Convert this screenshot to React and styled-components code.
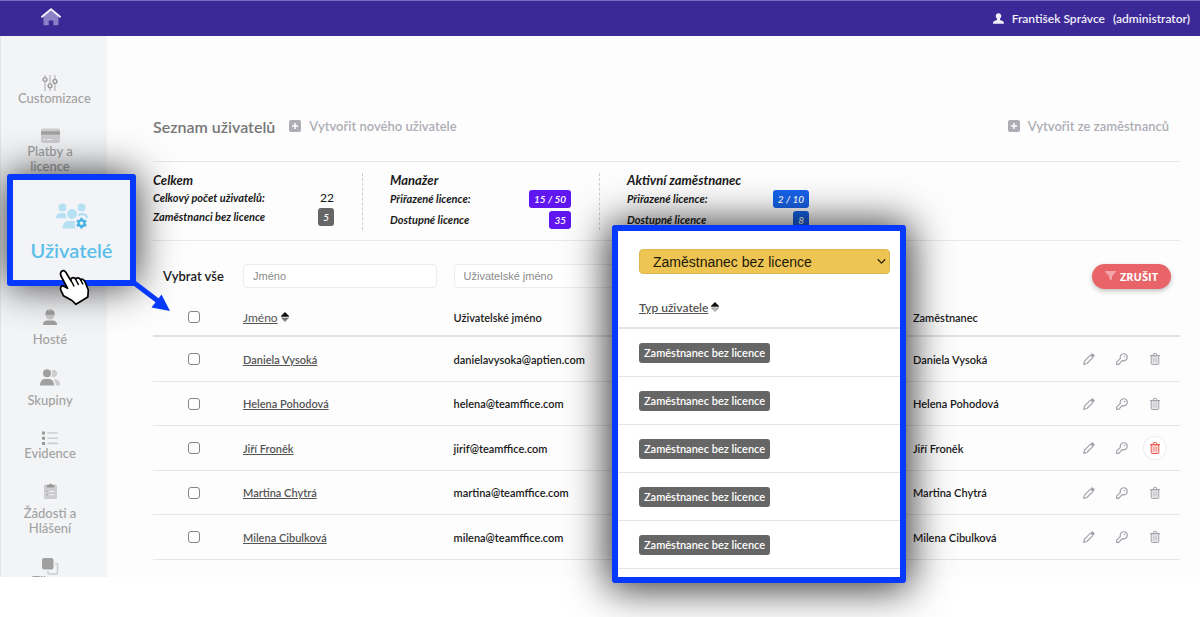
import React, { useState } from 'react';
import styled, { createGlobalStyle, css } from 'styled-components';

const GlobalStyle = createGlobalStyle`
  * {
    box-sizing: border-box;
  }
  body {
    margin: 0;
    background: #fff;
    color: #1a1a1a;
    font-family: Lato, 'Liberation Sans', sans-serif;
    font-size: 12px;
    font-weight: 500;
  }
`;

const Page = styled.div`
  position: relative;
  min-height: 100vh;
`;

const Topbar = styled.header`
  display: flex;
  align-items: center;
  justify-content: space-between;
  height: 36px;
  padding: 0 10px 0 41px;
  background: #3b2997;
  border-top: 1px solid #7a6cba;
`;

const HomeLink = styled.a`
  display: flex;
  margin-bottom: 4px;
`;

const Account = styled.a`
  display: flex;
  align-items: center;
  gap: 8px;
  color: #f1eff9;
  font-size: 12px;
  font-weight: 600;
  text-decoration: none;
`;

const Body = styled.div`
  display: grid;
  grid-template-columns: 107px 1fr;
`;

const Sidebar = styled.nav`
  contain: size;
  display: flex;
  flex-direction: column;
  gap: 22px;
  padding: 39px 25px 0 17px;
  overflow: hidden;
  background: #f3f4f6;
  border-left: 1px solid #e3e4e8;
`;

const SideItem = styled.a`
  display: flex;
  flex-direction: column;
  flex: none;
  gap: ${(props) => (props.$loose ? '7px' : '0')};
  color: #a2a2a2;
  font-size: 13px;
  line-height: 15px;
  text-align: center;
  text-decoration: none;

  svg {
    display: block;
    margin: 0 auto;
    overflow: visible;
  }
`;

const ActiveSlot = styled.div`
  flex: none;
  height: 91px;
`;

const ActiveItem = styled.a`
  position: absolute;
  top: 174px;
  left: 7px;
  display: flex;
  flex-direction: column;
  align-items: center;
  gap: 9px;
  width: 129px;
  height: 112px;
  padding-top: 23px;
  background: #f3f4f7;
  border: 6px solid #0639fb;
  border-radius: 3px;
  box-shadow: 0 0 40px rgba(0, 0, 0, 0.8);
  color: #5bbfe8;
  font-size: 20px;
  font-weight: 600;
  line-height: 24px;
  text-decoration: none;
`;

const Pointer = styled.svg`
  position: absolute;
  top: 264px;
  left: 54px;
  pointer-events: none;
`;

const Arrow = styled.svg`
  position: absolute;
  top: 278px;
  left: 128px;
  pointer-events: none;
`;

const Main = styled.main`
  padding: 74px 20px 17px 46px;
  background: #fdfdfd;
`;

const TitleRow = styled.div`
  display: flex;
  align-items: center;
  gap: 14px;
  height: 32px;
  padding-right: 11px;
  margin-bottom: 19px;
`;

const Title = styled.h1`
  margin: 0;
  color: #777;
  font-size: 16px;
  font-weight: 600;
`;

const CreateLink = styled.a`
  display: flex;
  align-items: center;
  gap: 8px;
  margin-left: ${(props) => (props.$right ? 'auto' : '0')};
  color: #adadb5;
  font-size: 13px;
  font-weight: 600;
  text-decoration: none;
`;

const Stats = styled.section`
  display: grid;
  grid-template-columns: repeat(3, 210px);
  column-gap: 27px;
  padding: 11px 0 10px;
  border-top: 1px solid #e8e8e8;
  border-bottom: 1px solid #e8e8e8;
  font-style: italic;
  font-weight: 600;
`;

const StatGroup = styled.div`
  padding-right: 28px;

  &:not(:last-child) {
    border-right: 1px dashed #cfcfcf;
  }
`;

const StatTitle = styled.h2`
  margin: 0;
  font-size: 13px;
  font-weight: 700;
  line-height: 15px;
`;

const StatLine = styled.div`
  display: flex;
  align-items: center;
  justify-content: space-between;
  min-height: ${(props) => (props.$tall ? '21px' : '19px')};
  font-size: 11px;
  font-weight: 700;
`;

const Count = styled.span`
  font-size: 12px;
  font-style: normal;
  font-weight: 500;
`;

const Badge = styled.span`
  display: inline-block;
  padding: 0 5px;
  border-radius: 3px;
  background: ${(props) => props.$color || '#666'};
  color: #fff;
  font-size: ${(props) => (props.$large ? '11px' : '10px')};
  font-weight: 600;
  line-height: ${(props) => (props.$large ? '20px' : '18px')};
`;

const Table = styled.table`
  width: 100%;
  border-collapse: separate;
  border-spacing: 0;
  table-layout: fixed;
`;

const Th = styled.th`
  height: ${(props) => (props.$filter ? '62px' : '34px')};
  padding: ${(props) => (props.$filter ? '8px 17px 0 0' : '0 0 4px')};
  border-bottom: ${(props) => (props.$filter ? '0' : '2px solid #e2e2e2')};
  font-size: 11px;
  font-weight: 600;
  text-align: left;
  white-space: nowrap;

  &:last-child {
    padding-right: 9px;
  }
`;

const Td = styled.td`
  height: 45px;
  padding: 0;
  border-bottom: 1px solid #e6e6e6;
  font-size: 11px;
  font-weight: 600;

  tr:nth-child(even) > & {
    height: 44px;
  }
`;

const SelectAll = styled.label`
  padding-left: 10px;
  font-size: 13px;
  font-weight: 600;
`;

const Checkbox = styled.input`
  appearance: none;
  display: block;
  width: 12px;
  height: 12px;
  margin: 0 0 0 35px;
  background: #fff;
  border: 1px solid #858585;
  border-radius: 3px;

  &:checked {
    background: #0639fb;
  }
`;

const FilterInput = styled.input`
  display: block;
  width: 100%;
  height: 24px;
  padding: 0 9px;
  background: #fff;
  border: 1px solid #ececf2;
  border-radius: 4px;
  color: #333;
  font-family: 'Liberation Sans', Arial, sans-serif;
  font-size: 11px;

  &::placeholder {
    color: #8b8b8b;
  }
`;

const ResetButton = styled.button`
  display: flex;
  align-items: center;
  justify-content: center;
  gap: 4px;
  width: 79px;
  height: 25px;
  margin-left: auto;
  padding: 0;
  background: #e86468;
  border: 0;
  border-radius: 13px;
  box-shadow: 0 2px 5px rgba(0, 0, 0, 0.25);
  color: #fff;
  font-family: 'Open Sans', sans-serif;
  font-size: 11px;
  font-weight: 700;
`;

const TextLink = styled.a`
  color: #555;
  font-size: 11px;
  font-weight: 600;
  text-decoration: underline;
`;

const SortLink = styled(TextLink)`
  margin-right: 3px;
  font-size: 12px;
  font-weight: ${(props) => (props.$strong ? '600' : '400')};
`;

const Actions = styled.div`
  display: flex;
  justify-content: flex-end;
  gap: 11px;
  padding-right: 5px;
`;

const IconButton = styled.button`
  display: flex;
  align-items: center;
  justify-content: center;
  width: 22px;
  height: 22px;
  padding: 0;
  background: none;
  border: 0;
  border-radius: 50%;
  color: #a3a3ad;

  ${(props) =>
    props.$danger &&
    css`
      background: #fff;
      box-shadow: 0 0 0 1px #ececf4;
      color: #ea5b50;
    `}
`;

const ActionsTd = styled(Td)`
  padding-right: 9px;
`;

const TypePanel = styled.aside`
  position: absolute;
  top: 225px;
  left: 612px;
  width: 294px;
  padding: 18px 0 8px;
  background: #fff;
  border: 6px solid #0639fb;
  border-radius: 3px;
  box-shadow: 0 2px 40px 4px rgba(0, 0, 0, 0.8);
`;

const SelectWrap = styled.div`
  position: relative;
  margin: 0 10px 0 21px;

  svg {
    position: absolute;
    top: 9px;
    right: 4px;
    pointer-events: none;
  }
`;

const TypeSelect = styled.select`
  appearance: none;
  display: block;
  width: 100%;
  height: 25px;
  padding: 0 20px 0 13px;
  background: #eec552;
  border: 1px solid #dcb750;
  border-radius: 4px;
  color: #1c1808;
  font-family: 'Liberation Sans', Arial, sans-serif;
  font-size: 14px;
`;

const TypeTh = styled.th`
  height: 55px;
  padding: 14px 0 0 21px;
  border-bottom: 2px solid #e4e4e4;
  text-align: left;
`;

const TypeTd = styled.td`
  height: 48px;
  padding: 0 0 0 21px;
  border-bottom: 1px solid #e4e4e4;
`;

const users = [
  { name: 'Daniela Vysoká', login: 'danielavysoka@aptien.com' },
  { name: 'Helena Pohodová', login: 'helena@teamffice.com' },
  { name: 'Jiří Froněk', login: 'jirif@teamffice.com', danger: true },
  { name: 'Martina Chytrá', login: 'martina@teamffice.com' },
  { name: 'Milena Cibulková', login: 'milena@teamffice.com' },
];

const HomeIcon = () => (
  <svg width='20' height='18' viewBox='0 0 20 18' fill='none'>
    <path d='M2.500 8.500 10 2.500l7.500 6V16.500q0 .8-.8.8H12.300V12.900q0-.5-.5-.5H8.200q-.5 0-.5.5v4.400H3.300q-.8 0-.8-.8z' fill='#8b7fc6' />
    <path d='M1 8.700 10 1.300l9 7.400' stroke='#f4f2fb' strokeWidth='2' strokeLinecap='round' strokeLinejoin='round' />
  </svg>
);

const PersonIcon = () => (
  <svg width='11' height='11' viewBox='0 0 11 11' fill='#f1eff9'>
    <path d='M5.500.3c1.900 0 2.900 1.300 2.700 3.100-.1 1-.6 1.800-1.200 2.400v1.100c2 .5 3.900.8 4 3.900H0c.1-3.100 2-3.400 4-3.900V5.800C3.400 5.200 2.900 4.400 2.800 3.400 2.600 1.600 3.600.3 5.500.3z' />
  </svg>
);

const SlidersIcon = () => (
  <svg width='16' height='16' viewBox='0 0 16 16' fill='none'>
    <path d='M3 0v2.500M3 6.500V16M8 0v8.500M8 13v3M13 0v4M13 8.500V16' stroke='#c6c6c8' strokeWidth='1.600' />
    <circle cx='3' cy='4.500' r='1.900' stroke='#999' strokeWidth='1.400' />
    <circle cx='8' cy='10.800' r='1.900' stroke='#999' strokeWidth='1.400' />
    <circle cx='13' cy='6.400' r='1.900' stroke='#999' strokeWidth='1.400' />
  </svg>
);

const CardIcon = () => (
  <svg width='19' height='16' viewBox='0 0 19 16'>
    <rect y='.5' width='19' height='14.500' rx='2' fill='#cdcdcf' />
    <path d='M0 3.300h19v3.400H0z' fill='#a0a0a0' />
    <path d='M2.300 11.500h2.500M6 11.500h5' stroke='#f0f0f0' strokeWidth='1' />
  </svg>
);

const GuestIcon = () => (
  <svg width='16' height='16' viewBox='0 0 16 16' fill='#a0a0a0'>
    <path d='M4 5h8v1.500a4 4 0 0 1-8 0z' fill='#c9c9cb' />
    <path d='M3.500 4.700C3.600 2.500 4.900 1 6.500.6L7 3l.4-2.800h1.200L9 3l.5-2.400c1.600.4 2.900 1.900 3 4.100l.5.3v.7H3V5z' />
    <path d='M.8 16c0-3 2-4.600 4.700-4.600h5c2.700 0 4.700 1.600 4.700 4.600z' />
  </svg>
);

const GroupIcon = () => (
  <svg width='20' height='17' viewBox='0 0 20 17'>
    <g fill='#cdcdcf'>
      <path d='M11.500 1.500a3.600 3.600 0 1 1 0 5.800q1.500-3 0-5.800z' />
      <path d='M13.600 10.400c4-.6 6.600 1.800 6.700 6.100h-4.600q.2-3.800-2.100-6.100z' />
    </g>
    <g fill='#a0a0a0'>
      <circle cx='7' cy='4.200' r='4' />
      <path d='M0 16.500c.1-3.900 2-6.400 5-6.400h4c3 0 5 2.500 5.100 6.400z' />
    </g>
  </svg>
);

const ListIcon = () => (
  <svg width='16' height='16' viewBox='0 0 16 16'>
    <path d='M5.500 3H16M5.500 8.200H16M5.500 13.400H16' stroke='#cdcdcf' strokeWidth='1.600' />
    <path d='M0 1.500h3v3H0zM0 6.700h3v3H0zM0 11.900h3v3H0z' fill='#999' />
  </svg>
);

const ClipboardIcon = () => (
  <svg width='13' height='16' viewBox='0 0 13 16'>
    <rect y='1.500' width='13' height='14.500' rx='1.500' fill='#cdcdcf' />
    <path d='M2.700 4.500V2h2a1.900 1.900 0 0 1 3.600 0h2v2.500z' fill='#999' />
    <path d='M2.700 8.500h1.200M2.700 11.700h1.200' stroke='#999' strokeWidth='1.200' />
    <path d='M5.200 8.500h5M5.200 11.700h5' stroke='#f0f0f0' strokeWidth='1' />
  </svg>
);

const CopyIcon = () => (
  <svg width='17' height='16' viewBox='0 0 17 16'>
    <path d='M13 5.500h1.500a1 1 0 0 1 1 1V15a1 1 0 0 1-1 1H7a1 1 0 0 1-1-1v-2' fill='none' stroke='#cdcdcf' strokeWidth='1.600' />
    <rect width='11.500' height='11.500' rx='2' fill='#a0a0a0' />
  </svg>
);

const UsersGearIcon = () => (
  <svg width='32' height='26' viewBox='0 0 32 26'>
    <g fill='#b7e0f3'>
      <circle cx='6.500' cy='4.500' r='4' />
      <circle cx='25.500' cy='4.500' r='4' />
      <circle cx='16' cy='11' r='5' />
      <path d='M0 15.300c0-3.200 1.700-5.300 4.300-5.300H8q1 0 2 .5-.8 2.800.8 4.800zM32 15.300c0-3.200-1.700-5.300-4.300-5.300H24q-1 0-2 .5.500 2-.3 3.400 3.300-3 7.300-.4l1.300 1.800z' />
      <path d='M6.500 25.500c0-4.300 2.400-7.400 6-7.400h6.400q.2 1.500-.2 2.600c-.2 2 .4 3.600 2 4.800z' />
    </g>
    <g fill='none' stroke='#48b3e3'>
      <circle cx='25.500' cy='20.200' r='3' strokeWidth='2.400' />
      <path d='M25.500 14.800v2M25.500 23.600v2M20.800 17.500l1.800 1M28.400 21.900l1.800 1M30.200 17.500l-1.800 1M22.600 21.900l-1.800 1' strokeWidth='2.400' />
    </g>
  </svg>
);

const PlusIcon = () => (
  <svg width='12' height='12' viewBox='0 0 12 12'>
    <rect width='12' height='12' rx='2' fill='#adadb5' />
    <path d='M6 3v6M3 6h6' stroke='#fff' strokeWidth='1.500' />
  </svg>
);

const SortIcon = ({ outline }) => (
  <svg width='8' height='10' viewBox='0 0 8 10'>
    <path d='M4 0 8 4v.7H0V4z' fill='#111' />
    <path d='M.5 6h7L4 9.400z' fill={outline ? '#ccc' : '#777'} stroke='#777' strokeWidth='.7' />
  </svg>
);

const FunnelIcon = () => (
  <svg width='11' height='10' viewBox='0 0 11 10'>
    <path d='M.3 0h10.400q.5.400.1.900L7 5.200V9.600L4.200 7.800V5.200L.2.900Q-.1.300.3 0z' fill='#f3a6a9' />
  </svg>
);

const PencilIcon = () => (
  <svg width='12' height='12' viewBox='0 0 12 12' fill='none' stroke='currentColor' strokeLinejoin='round'>
    <path d='M7.400 2.200 1.500 8.100.7 11.300l3.200-.8 5.900-5.900' strokeWidth='1.200' />
    <path d='m7.400 2.200 1.100-1.100q.8-.8 1.600 0l.8.800q.8.800 0 1.600L9.800 4.600z' fill='currentColor' strokeWidth='.8' />
  </svg>
);

const KeyIcon = () => (
  <svg width='12' height='12' viewBox='0 0 12 12' fill='none' stroke='currentColor'>
    <path d='M4.400 5.300A3.500 3.500 0 1 1 6.700 7.600L5.800 7.800 2.800 11.300H.6V9.100z' strokeWidth='1.200' strokeLinejoin='round' />
    <circle cx='8.500' cy='3.500' r='.6' fill='currentColor' strokeWidth='.3' />
  </svg>
);

const TrashIcon = () => (
  <svg width='10' height='12' viewBox='0 0 10 12' fill='none' stroke='currentColor'>
    <path d='M1.200 2.700h7.600v7.800q0 1-1 1H2.200q-1 0-1-1z' fill='currentColor' fillOpacity='.25' />
    <path d='M0 2.600h10M3 2.300 3.700.6h2.600L7 2.300' />
    <path d='M3.500 4.700v4.800M5 4.700v4.800M6.500 4.700v4.800' strokeWidth='.6' strokeOpacity='.7' />
  </svg>
);

const UserRow = ({ user }) => (
  <tr>
    <Td>
      <Checkbox type='checkbox' aria-label={user.name} />
    </Td>
    <Td>
      <TextLink href='#user'>{user.name}</TextLink>
    </Td>
    <Td>{user.login}</Td>
    <Td />
    <Td>{user.name}</Td>
    <ActionsTd>
      <Actions>
        <IconButton type='button' aria-label='Upravit'>
          <PencilIcon />
        </IconButton>
        <IconButton type='button' aria-label='Heslo'>
          <KeyIcon />
        </IconButton>
        <IconButton type='button' aria-label='Smazat' $danger={user.danger}>
          <TrashIcon />
        </IconButton>
      </Actions>
    </ActionsTd>
  </tr>
);

const App = () => {
  const [nameFilter, setNameFilter] = useState('');
  const [loginFilter, setLoginFilter] = useState('');

  const handleReset = () => {
    setNameFilter('');
    setLoginFilter('');
  };

  const filteredUsers = users.filter(
    (user) => user.name.includes(nameFilter) && user.login.includes(loginFilter)
  );

  return (
    <Page>
      <GlobalStyle />
      <Topbar>
        <HomeLink href='#home' aria-label='Domů'>
          <HomeIcon />
        </HomeLink>
        <Account href='#account'>
          <PersonIcon />
          <span>František Správce</span>
          <span>(administrator)</span>
        </Account>
      </Topbar>

      <Body>
        <Sidebar>
          <SideItem href='#custom'>
            <SlidersIcon />
            Customizace
          </SideItem>
          <SideItem href='#billing'>
            <CardIcon />
            Platby a licence
          </SideItem>
          <ActiveSlot />
          <SideItem href='#guests' $loose>
            <GuestIcon />
            Hosté
          </SideItem>
          <SideItem href='#groups' $loose>
            <GroupIcon />
            Skupiny
          </SideItem>
          <SideItem href='#records'>
            <ListIcon />
            Evidence
          </SideItem>
          <SideItem href='#requests' $loose>
            <ClipboardIcon />
            Žádosti a Hlášení
          </SideItem>
          <SideItem href='#tickets'>
            <CopyIcon />
            Tikety
          </SideItem>
        </Sidebar>

        <Main>
          <TitleRow>
            <Title>Seznam uživatelů</Title>
            <CreateLink href='#new'>
              <PlusIcon />
              Vytvořit nového uživatele
            </CreateLink>
            <CreateLink href='#from-employees' $right>
              <PlusIcon />
              Vytvořit ze zaměstnanců
            </CreateLink>
          </TitleRow>

          <Stats>
            <StatGroup>
              <StatTitle>Celkem</StatTitle>
              <StatLine>
                Celkový počet uživatelů: <Count>22</Count>
              </StatLine>
              <StatLine>
                Zaměstnanci bez licence <Badge>5</Badge>
              </StatLine>
            </StatGroup>
            <StatGroup>
              <StatTitle>Manažer</StatTitle>
              <StatLine $tall>
                Přiřazené licence: <Badge $color='#6016f0'>15 / 50</Badge>
              </StatLine>
              <StatLine $tall>
                Dostupné licence <Badge $color='#6016f0'>35</Badge>
              </StatLine>
            </StatGroup>
            <StatGroup>
              <StatTitle>Aktivní zaměstnanec</StatTitle>
              <StatLine $tall>
                Přiřazené licence: <Badge $color='#1763ea'>2 / 10</Badge>
              </StatLine>
              <StatLine $tall>
                Dostupné licence <Badge $color='#1763ea'>8</Badge>
              </StatLine>
            </StatGroup>
          </Stats>

          <Table>
            <colgroup>
              <col style={{ width: '90px' }} />
              <col style={{ width: '20.5%' }} />
              <col style={{ width: '20.5%' }} />
              <col />
              <col style={{ width: '15%' }} />
              <col style={{ width: '113px' }} />
            </colgroup>
            <thead>
              <tr>
                <Th $filter>
                  <SelectAll htmlFor='select-all'>Vybrat vše</SelectAll>
                </Th>
                <Th $filter>
                  <FilterInput
                    type='text'
                    placeholder='Jméno'
                    aria-label='Jméno'
                    value={nameFilter}
                    onChange={(e) => setNameFilter(e.target.value)}
                  />
                </Th>
                <Th $filter>
                  <FilterInput
                    type='text'
                    placeholder='Uživatelské jméno'
                    aria-label='Uživatelské jméno'
                    value={loginFilter}
                    onChange={(e) => setLoginFilter(e.target.value)}
                  />
                </Th>
                <Th $filter />
                <Th $filter />
                <Th $filter>
                  <ResetButton type='button' onClick={handleReset}>
                    <FunnelIcon />
                    ZRUŠIT
                  </ResetButton>
                </Th>
              </tr>
              <tr>
                <Th>
                  <Checkbox id='select-all' type='checkbox' />
                </Th>
                <Th>
                  <SortLink href='#sort-name'>Jméno</SortLink>
                  <SortIcon />
                </Th>
                <Th>Uživatelské jméno</Th>
                <Th />
                <Th>Zaměstnanec</Th>
                <Th />
              </tr>
            </thead>
            <tbody>
              {filteredUsers.map((user) => (
                <UserRow key={user.login} user={user} />
              ))}
            </tbody>
          </Table>
        </Main>
      </Body>

      <ActiveItem href='#users'>
        <UsersGearIcon />
        Uživatelé
      </ActiveItem>
      <Arrow width='44' height='36' viewBox='0 0 44 36'>
        <path d='M5 4 30 23' stroke='#0639fb' strokeWidth='5' />
        <path d='M42 33 23.500 29.500 33.500 16.500z' fill='#0639fb' />
      </Arrow>
      <Pointer width='44' height='44' viewBox='0 0 44 44'>
        <path
          d='M7.500 7.300Q10 5.600 11.800 8.200L17 16.800Q16.300 14.300 18.500 13.800 20.500 13.300 21.800 15.300 22.300 13.600 24 13.800 25.800 14 26.700 16 27.500 14.800 29 15.500 30.500 16.200 31.300 18.500L34.300 26 33.800 33 22 40.300 18 36.500 9.500 31.800 6.600 25.500Q6.300 21.600 9.300 22L13.600 24.300 7 12Q5.800 9 7.500 7.300z'
          fill='#fff'
          stroke='#000'
          strokeWidth='1.700'
          strokeLinejoin='round'
        />
        <path d='m17 16.500 3.200 6M21.800 15.500l2.800 5.500M26.700 16l2.300 4.500' stroke='#000' strokeWidth='1.500' />
      </Pointer>

      <TypePanel>
        <SelectWrap>
          <TypeSelect aria-label='Typ uživatele' defaultValue='none'>
            <option value='none'>Zaměstnanec bez licence</option>
            <option value='manager'>Manažer</option>
            <option value='active'>Aktivní zaměstnanec</option>
          </TypeSelect>
          <svg width='9' height='7' viewBox='0 0 9 7' fill='none'>
            <path d='m.8 1.200 3.700 3.900 3.700-3.900' stroke='#2a2410' strokeWidth='1.300' />
          </svg>
        </SelectWrap>
        <Table>
          <thead>
            <tr>
              <TypeTh>
                <SortLink href='#sort-type' $strong>
                  Typ uživatele
                </SortLink>
                <SortIcon outline />
              </TypeTh>
            </tr>
          </thead>
          <tbody>
            {users.map((user) => (
              <tr key={user.login}>
                <TypeTd>
                  <Badge $large>Zaměstnanec bez licence</Badge>
                </TypeTd>
              </tr>
            ))}
          </tbody>
        </Table>
      </TypePanel>
    </Page>
  );
};

export default App;
